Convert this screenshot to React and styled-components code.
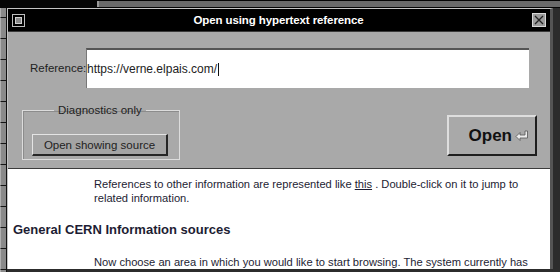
import React from "react";
import styled, { createGlobalStyle } from "styled-components";

const GlobalStyle = createGlobalStyle`
  html, body {
    margin: 0;
    padding: 0;
    background: #2c2c2c;
    font-family: "Liberation Sans", Arial, sans-serif;
  }
`;

const Desktop = styled.div`
  width: 560px;
  height: 272px;
  overflow: hidden;
  display: grid;
  grid-template-columns: 7px 546px 7px;
  grid-template-rows: 8px 1fr;
  align-items: start;
  background: #2c2c2c;
`;

const TopStrip = styled.div`
  grid-column: 1 / 4;
  height: 8px;
  display: flex;
  align-items: center;
  background: #050505;
  padding-left: 97px;
`;

const TopBar = styled.div`
  flex: 1;
  height: 6px;
  background: #6a6a6a;
  border-left: 2px solid #9a9a9a;
`;

const SideStrip = styled.div`
  display: flex;
  flex-direction: column;
  background: #111;
  border-right: 1px solid #111;
  height: 264px;
  overflow: hidden;
`;

const SideSegment = styled.div`
  height: ${(p) => p.h || 20}px;
  flex-shrink: 0;
  background: #8a8a8a;
  border-bottom: 1px solid #151515;
  border-left: 1px solid #b0b0b0;
`;

const RightGap = styled.div`
  height: 264px;
  background: #2c2c2c;
`;

const Window = styled.div`
  display: flex;
  flex-direction: column;
  height: 260px;
  border-top: 1px solid #c4c4c4;
  border-left: 1px solid #c4c4c4;
  border-right: 3px solid #555;
  background: #a9a9a9;
`;

const TitleBar = styled.div`
  height: 22px;
  flex-shrink: 0;
  display: flex;
  align-items: center;
  justify-content: space-between;
  padding: 0 4px;
  background: #000;
  border-bottom: 1px solid #3a3a3a;
`;

const Title = styled.div`
  color: #fff;
  font-weight: bold;
  font-size: 11.5px;
  letter-spacing: -0.1px;
`;

const MenuBox = styled.div`
  width: 13px;
  height: 13px;
  box-sizing: border-box;
  border: 1px solid #bdbdbd;
  background: #000;
  display: flex;
  align-items: center;
  justify-content: center;
`;

const MenuInner = styled.div`
  width: 7px;
  height: 7px;
  box-sizing: border-box;
  border: 1px solid #d0d0d0;
  background: #8a8a8a;
`;

const CloseBox = styled.div`
  width: 14px;
  height: 14px;
  box-sizing: border-box;
  border: 1px solid #d8d8d8;
  background: #9c9c9c;
  display: flex;
  align-items: center;
  justify-content: center;
`;

const Body = styled.div`
  height: 137px;
  flex-shrink: 0;
  box-sizing: border-box;
  padding: 16px 13px 0 14px;
  background: #a9a9a9;
  border-bottom: 1px solid #3c3c3c;
  display: flex;
  flex-direction: column;
`;

const RefRow = styled.div`
  display: flex;
  align-items: center;
  margin-left: 8px;
  height: 40px;
`;

const Label = styled.label`
  width: 56px;
  font-size: 11.5px;
  color: #222;
`;

const Field = styled.div`
  width: 443px;
  height: 40px;
  box-sizing: border-box;
  background: #fff;
  border-top: 2px solid #555;
  border-left: 1px solid #777;
  display: flex;
  align-items: center;
  font-size: 12px;
  color: #222;
`;

const Caret = styled.span`
  display: inline-block;
  width: 1px;
  height: 13px;
  margin-left: 1px;
  background: #111;
`;

const BottomRow = styled.div`
  display: flex;
  justify-content: space-between;
  align-items: flex-start;
  margin-top: 16px;
`;

const Group = styled.fieldset`
  margin: 0;
  width: 158px;
  box-sizing: border-box;
  padding: 17px 9px 3px 9px;
  border: 1px solid #dcdcdc;
  box-shadow: inset 1px 1px 0 #8c8c8c;
`;

const Legend = styled.legend`
  margin-left: 22px;
  padding: 0 4px;
  font-size: 11.5px;
  line-height: 13px;
  color: #222;
`;

const SmallButton = styled.button`
  width: 136px;
  height: 22px;
  box-sizing: border-box;
  margin: 0;
  padding: 0;
  background: #a4a4a4;
  border-top: 1px solid #e4e4e4;
  border-left: 1px solid #e4e4e4;
  border-right: 2px solid #262626;
  border-bottom: 2px solid #262626;
  font-family: inherit;
  font-size: 11.5px;
  color: #222;
`;

const OpenButton = styled.button`
  margin: 11px 0 0 0;
  width: 90px;
  height: 41px;
  box-sizing: border-box;
  padding: 0 6px 0 0;
  display: flex;
  align-items: center;
  justify-content: flex-end;
  gap: 3px;
  background: #a9a9a9;
  border-top: 2px solid #dedede;
  border-left: 2px solid #dedede;
  border-right: 2px solid #1e1e1e;
  border-bottom: 2px solid #1e1e1e;
  font-family: inherit;
  font-weight: bold;
  font-size: 17px;
  color: #111;
`;

const Content = styled.div`
  flex: 1;
  overflow: hidden;
  background: #fff;
  padding: 8px 0 0 5px;
  color: #1d1d33;
`;

const Para = styled.p`
  margin: 0 0 0 81px;
  font-size: 11.15px;
  line-height: 14px;
  white-space: nowrap;
`;

const Anchor = styled.span`
  text-decoration: underline;
`;

const Heading = styled.h2`
  margin: 17px 0 17px 0;
  font-size: 13px;
  line-height: 16px;
  font-weight: bold;
`;

function ReturnArrow() {
  return (
    <svg width="14" height="11" viewBox="0 0 14 11">
      <path
        d="M1 6.5 L5 2.5 V5 H10 V1 H12.5 V8 H5 V10.5 Z"
        fill="#ececec"
        stroke="#555"
        strokeWidth="0.8"
      />
    </svg>
  );
}

function CloseX() {
  return (
    <svg width="10" height="10" viewBox="0 0 10 10">
      <path d="M1 1 L9 9 M9 1 L1 9" stroke="#222" strokeWidth="1.3" />
    </svg>
  );
}

const segments = [9, 20, 20, 20, 20, 20, 20, 20, 20, 20, 20, 20, 20, 20];

export default function App() {
  return (
    <>
      <GlobalStyle />
      <Desktop>
        <TopStrip>
          <TopBar />
        </TopStrip>
        <SideStrip>
          {segments.map((h, i) => (
            <SideSegment key={i} h={h} />
          ))}
        </SideStrip>
        <Window>
          <TitleBar>
            <MenuBox>
              <MenuInner />
            </MenuBox>
            <Title>Open using hypertext reference</Title>
            <CloseBox>
              <CloseX />
            </CloseBox>
          </TitleBar>
          <Body>
            <RefRow>
              <Label>Reference:</Label>
              <Field>
                https://verne.elpais.com/
                <Caret />
              </Field>
            </RefRow>
            <BottomRow>
              <Group>
                <Legend>Diagnostics only</Legend>
                <SmallButton>Open showing source</SmallButton>
              </Group>
              <OpenButton>
                Open
                <ReturnArrow />
              </OpenButton>
            </BottomRow>
          </Body>
          <Content>
            <Para>
              References to other information are represented like <Anchor>this</Anchor> . Double-click on it to jump to
              <br />
              related information.
            </Para>
            <Heading>General CERN Information sources</Heading>
            <Para>
              Now choose an area in which you would like to start browsing. The system currently has
            </Para>
          </Content>
        </Window>
        <RightGap />
      </Desktop>
    </>
  );
}
